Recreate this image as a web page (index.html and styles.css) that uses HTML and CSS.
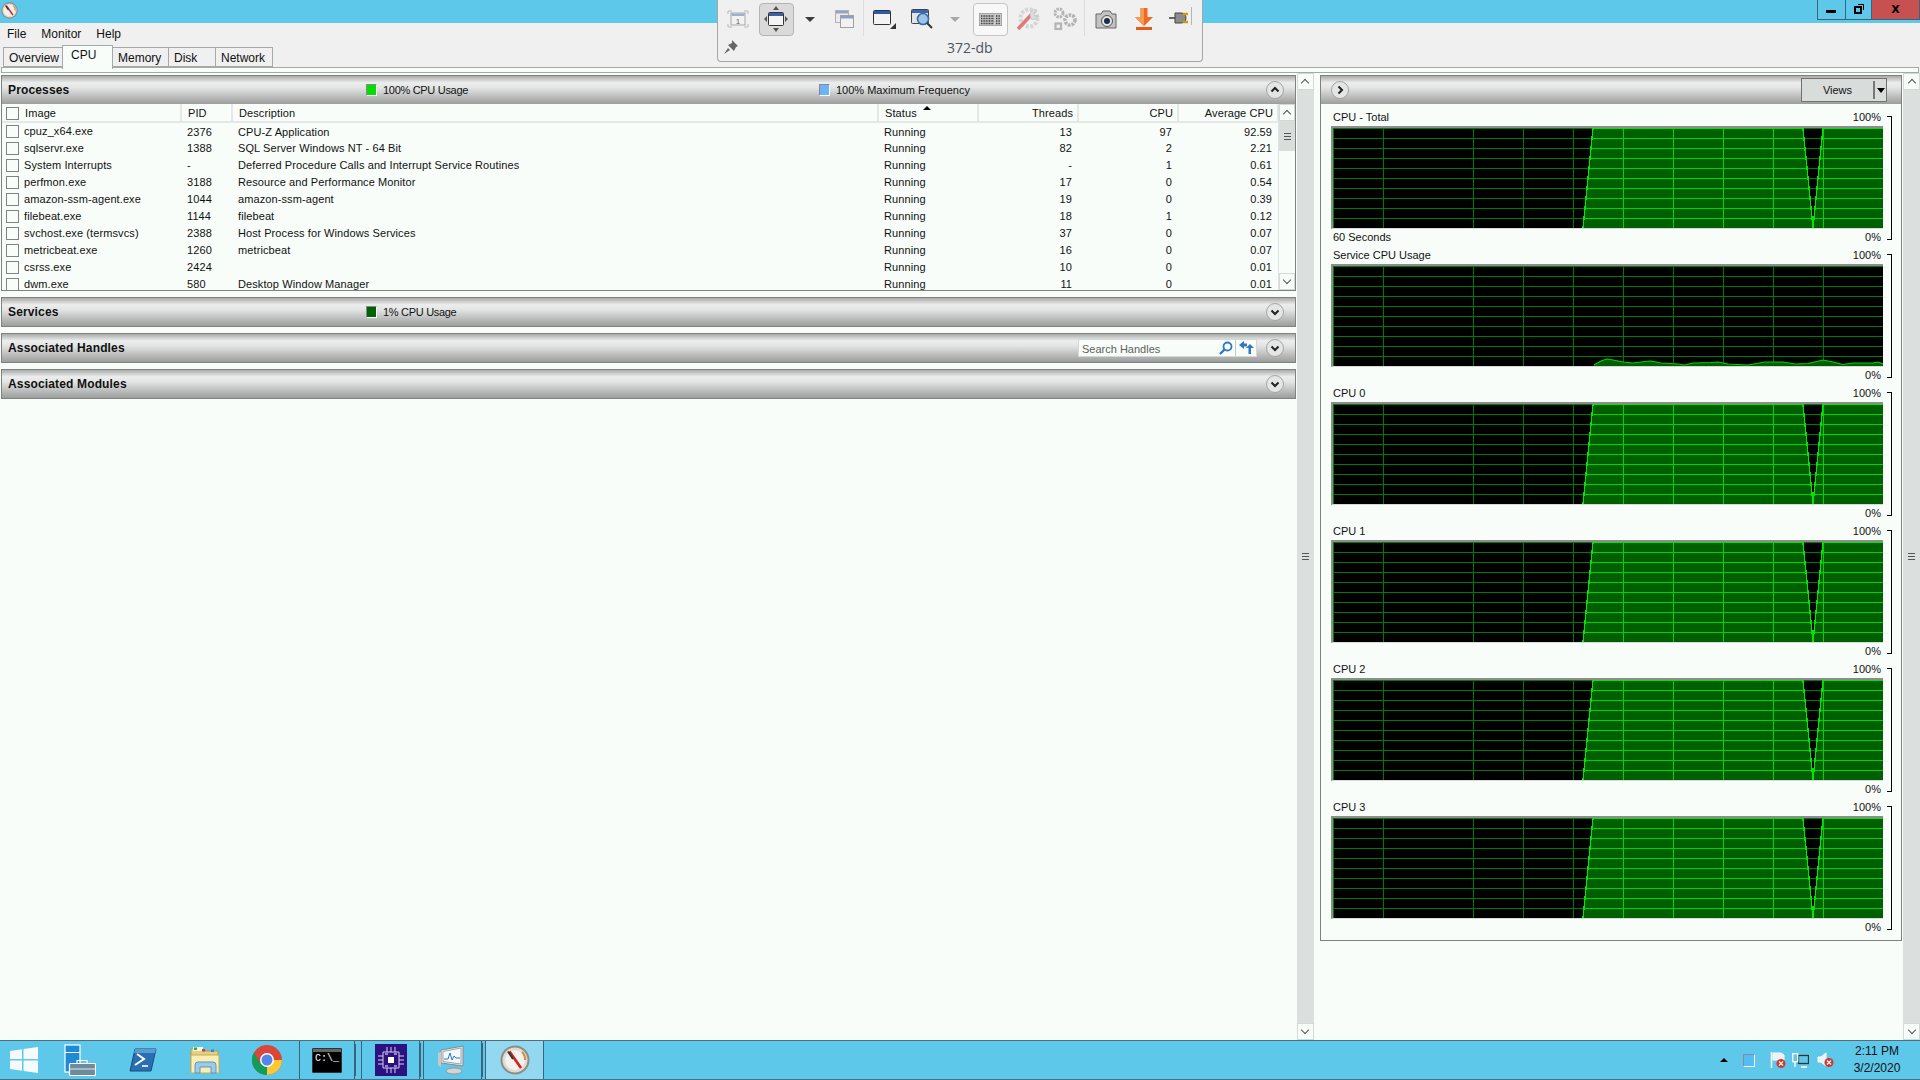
FILE: index.html
```html
<!DOCTYPE html>
<html lang="en">
<head>
    <meta charset="UTF-8">
    <title>Resource Monitor</title>
    <link rel="stylesheet" href="styles.css">
</head>
<body>
    <!-- Shared icons -->
    <svg class="sprite" aria-hidden="true">
        <defs>
            <symbol id="chev" viewBox="0 0 18 18">
                <circle cx="9" cy="9" r="8.5" fill="#e4e6e5" stroke="#a2a5a4"/>
                <path d="M5.5 7.5 9 11l3.5-3.5" fill="none" stroke="#222" stroke-width="2"/>
            </symbol>
            <symbol id="compass" viewBox="0 0 30 30">
                <circle cx="15" cy="15" r="14.5" fill="#8d8d88"/>
                <circle cx="15" cy="15" r="12.5" fill="#dedbd2"/>
                <circle cx="15" cy="15" r="10" fill="#f4f2ec"/>
                <path d="M22 7a10 10 0 0 1 3 8" fill="none" stroke="#d98a3a" stroke-width="2"/>
                <path d="M9.5 6.5 21 23" stroke="#d02020" stroke-width="2.6"/>
                <path d="M8 6.5 13 14" stroke="#333" stroke-width="2"/>
            </symbol>
            <path id="grid-lines" d="M.5 0v100M50.5 0v100M140.5 0v100M190.5 0v100M240.5 0v100M290.5 0v100M340.5 0v100M390.5 0v100M440.5 0v100M490.5 0v100M0 .5h550M0 10.5h550M0 20.5h550M0 30.5h550M0 40.5h550M0 50.5h550M0 60.5h550M0 70.5h550M0 80.5h550M0 90.5h550" fill="none"/>
            <clipPath id="load-clip"><path d="M250 100 260 0H470L480 100 490 0H550V100Z"/></clipPath>
            <symbol id="chart-load" viewBox="0 0 550 100">
                <rect width="550" height="100" fill="#000"/>
                <use href="#grid-lines" stroke="#007a00"/>
                <path d="M250 100 260 0H470L480 100 490 0H550V100Z" fill="#005f00"/>
                <g clip-path="url(#load-clip)"><use href="#grid-lines" stroke="#00d400"/></g>
                <path d="M250 100 260 .5H470L480 100 490 .5H550" fill="none" stroke="#00e600" stroke-width="1.4" shape-rendering="crispEdges"/>
            </symbol>
            <symbol id="chart-svc" viewBox="0 0 550 100">
                <rect width="550" height="100" fill="#000"/>
                <use href="#grid-lines" stroke="#007a00"/>
                <path d="M261 100V99L268 95 274 93 280 94 290 96 300 97 312 95.5 318 95 328 97 345 98 352 99 360 97 378 96.5 385 96 395 98 415 99 432 96 450 96 462 98 475 97.5 490 94 500 96 510 98.5 520 97 540 97 545 96 550 98V100Z" fill="#005f00"/>
                <path d="M261 99 268 95 274 93 280 94 290 96 300 97 312 95.5 318 95 328 97 345 98 352 99 360 97 378 96.5 385 96 395 98 415 99 432 96 450 96 462 98 475 97.5 490 94 500 96 510 98.5 520 97 540 97 545 96 550 98" fill="none" stroke="#00d400" stroke-width="1.2"/>
            </symbol>
        </defs>
    </svg>

    <div class="titlebar">
        <svg class="app-icon"><use href="#compass"/></svg>
        <div class="win-buttons">
            <div class="win-btn win-min"><span class="min-glyph"></span></div>
            <div class="win-btn win-restore"><span class="restore-glyph"></span></div>
            <div class="win-btn win-close">X</div>
        </div>
    </div>

    <!-- Remote desktop connection bar, floats over the window -->
    <div class="conn-bar">
        <div class="conn-icons">
            <div class="conn-slot">
                <svg width="22" height="18" viewBox="0 0 22 18"><path d="M1 4V1h4M17 1h4v3M1 14v3h4M17 17h4v-3" fill="none" stroke="#b9b9b9"/><rect x="4" y="3" width="14" height="12" fill="#f2f2f2" stroke="#a8a8a8"/><rect x="4.5" y="3.5" width="13" height="2.5" fill="#9fb0cc"/><text x="11" y="13.500" class="tiny-num">1</text></svg>
            </div>
            <div class="conn-slot">
                <div class="conn-toggle on">
                    <svg width="24" height="26" viewBox="0 0 24 26"><path d="M12 0l3 4H9zM12 26l-3-4h6zM0 13l3-3v6zM24 13l-3 3v-6z" fill="#555"/><rect x="4.500" y="6.500" width="15" height="13" rx="1" fill="#f4f4f4" stroke="#333"/><rect x="5" y="7" width="14" height="3" fill="#3b5ea8"/></svg>
                </div>
            </div>
            <div class="conn-slot"><span class="caret"></span></div>
            <div class="conn-slot">
                <svg width="19" height="19" viewBox="0 0 19 19"><rect x=".5" y=".5" width="13" height="12" fill="#ececec" stroke="#b0b0b0"/><rect x="1" y="1" width="12" height="2.500" fill="#93a6c6"/><rect x="5.500" y="5.500" width="13" height="12" fill="#f2f2f2" stroke="#a0a0a0"/><rect x="6" y="6" width="12" height="2.500" fill="#8ba0c4"/></svg>
            </div>
            <div class="conn-sep"></div>
            <div class="conn-slot">
                <svg width="23" height="19" viewBox="0 0 23 19"><rect x=".5" y=".5" width="17" height="14" rx="1" fill="#f3f3f3" stroke="#333"/><rect x="1" y="1" width="16" height="3" fill="#2f5aa6"/><path d="M23 19h-6l6-6z" fill="#333"/></svg>
            </div>
            <div class="conn-slot">
                <svg width="22" height="20" viewBox="0 0 22 20"><rect x=".5" y=".5" width="17" height="14" rx="1" fill="#e4e4e4" stroke="#444"/><rect x="1" y="1" width="16" height="3" fill="#3d66ae"/><circle cx="12" cy="10" r="5.500" fill="#9cc4ea" stroke="#3a6ea5" stroke-width="1.600"/><path d="M16 14l5 5" stroke="#333" stroke-width="2"/></svg>
            </div>
            <div class="conn-slot"><span class="caret faded"></span></div>
            <div class="conn-slot">
                <div class="conn-toggle key">
                    <svg width="23" height="13" viewBox="0 0 23 13"><rect width="23" height="13" fill="#c8c8c8" stroke="#888"/><path d="M2 3h13M2 5.500h13M2 8h13M2 10.500h13M17 3h4M17 5.500h4M17 8h4M17 10.500h4" stroke="#3c3c3c" stroke-width="1.500" stroke-dasharray="1 .6"/></svg>
                </div>
            </div>
            <div class="conn-slot">
                <svg width="24" height="24" viewBox="0 0 24 24"><circle cx="13" cy="11" r="8.500" fill="none" stroke="#d6d6d6" stroke-width="4" stroke-dasharray="3 1.500"/><path d="M2 22 15 8" stroke="#e07a78" stroke-width="3.500"/><path d="M14 8a5 5 0 0 1 7-5l-3 3 1 3 3 0a5 5 0 0 1-7 3z" fill="#dcdcdc" stroke="#bbb" stroke-width=".6"/></svg>
            </div>
            <div class="conn-slot">
                <svg width="26" height="24" viewBox="0 0 26 24" fill="none" stroke="#b4b4b4"><circle cx="7" cy="6" r="4" stroke-width="3" stroke-dasharray="2.200 1"/><circle cx="18" cy="13" r="5" stroke-width="3.600" stroke-dasharray="2.600 1"/><rect x="3.500" y="16.500" width="5.500" height="5.500" stroke-width="2.200"/></svg>
            </div>
            <div class="conn-sep"></div>
            <div class="conn-slot">
                <svg width="22" height="19" viewBox="0 0 22 19"><path d="M1 4h5l2-3h7l2 3h4v14H1z" fill="#c4c4c4" stroke="#666"/><circle cx="12" cy="11" r="5.500" fill="#e6e6e6" stroke="#555"/><circle cx="12" cy="11" r="3" fill="#1f2d4a"/></svg>
            </div>
            <div class="conn-slot">
                <svg width="18" height="22" viewBox="0 0 18 22"><path d="M5.500 0h7v9H18L9 18 0 9h5.500z" fill="#ee6a22"/><path d="M5.500 0H9v18L0 9h5.500z" fill="#f59a52"/><rect x="1" y="19" width="16" height="3" fill="#e85a18"/></svg>
            </div>
            <div class="conn-slot plug-slot">
                <svg width="23" height="24" viewBox="0 0 23 24"><path d="M0 11h7" stroke="#666" stroke-width="2"/><path d="M6 6h6a5 5 0 0 1 0 10H6z" fill="#8c8c8c" stroke="#444"/><path d="M14 7h5M14 15h5" stroke="#c9a400" stroke-width="2.400"/><path d="M22.500 0v18" stroke="#b5b5b5"/></svg>
            </div>
        </div>
        <div class="conn-foot">
            <svg class="pin" width="14" height="14" viewBox="0 0 14 14"><path d="M8 0l6 6-2 1-2 4-6-6 4-2zM4 8 0 14l6-4z" fill="#666"/></svg>
            <span class="conn-name">372-db</span>
        </div>
    </div>

    <div class="menubar">
        <span>File</span>
        <span>Monitor</span>
        <span>Help</span>
    </div>

    <div class="tabs">
        <div class="tab tab-overview">Overview</div>
        <div class="tab tab-active">CPU</div>
        <div class="tab tab-memory">Memory</div>
        <div class="tab tab-disk">Disk</div>
        <div class="tab tab-network">Network</div>
    </div>
    <div class="tab-pane"></div>

    <div class="main">
        <!-- Left column: sections -->
        <div class="left-col">
            <div class="panel">
                <div class="panel-head">
                    <span class="panel-title">Processes</span>
                    <span class="legend legend-cpu"><i class="swatch green"></i>100% CPU Usage</span>
                    <span class="legend legend-freq"><i class="swatch blue"></i>100% Maximum Frequency</span>
                    <svg class="chev up"><use href="#chev"/></svg>
                </div>
                <div class="table-wrap">
                    <div class="table-clip">
                        <table class="proc-table">
                            <colgroup>
                                <col class="c-image"><col class="c-pid"><col class="c-desc"><col class="c-num"><col class="c-num"><col class="c-num"><col class="c-num">
                            </colgroup>
                            <thead>
                                <tr>
                                    <th class="first"><i class="check"></i>Image</th>
                                    <th>PID</th>
                                    <th>Description</th>
                                    <th class="sorted">Status<i class="sort-arrow"></i></th>
                                    <th class="num">Threads</th>
                                    <th class="num">CPU</th>
                                    <th class="num">Average CPU</th>
                                </tr>
                            </thead>
                            <tbody>
                                <tr><td class="first"><i class="check"></i>cpuz_x64.exe</td><td>2376</td><td>CPU-Z Application</td><td>Running</td><td class="num">13</td><td class="num">97</td><td class="num">92.59</td></tr>
                                <tr><td class="first"><i class="check"></i>sqlservr.exe</td><td>1388</td><td>SQL Server Windows NT - 64 Bit</td><td>Running</td><td class="num">82</td><td class="num">2</td><td class="num">2.21</td></tr>
                                <tr><td class="first"><i class="check"></i>System Interrupts</td><td>-</td><td>Deferred Procedure Calls and Interrupt Service Routines</td><td>Running</td><td class="num">-</td><td class="num">1</td><td class="num">0.61</td></tr>
                                <tr><td class="first"><i class="check"></i>perfmon.exe</td><td>3188</td><td>Resource and Performance Monitor</td><td>Running</td><td class="num">17</td><td class="num">0</td><td class="num">0.54</td></tr>
                                <tr><td class="first"><i class="check"></i>amazon-ssm-agent.exe</td><td>1044</td><td>amazon-ssm-agent</td><td>Running</td><td class="num">19</td><td class="num">0</td><td class="num">0.39</td></tr>
                                <tr><td class="first"><i class="check"></i>filebeat.exe</td><td>1144</td><td>filebeat</td><td>Running</td><td class="num">18</td><td class="num">1</td><td class="num">0.12</td></tr>
                                <tr><td class="first"><i class="check"></i>svchost.exe (termsvcs)</td><td>2388</td><td>Host Process for Windows Services</td><td>Running</td><td class="num">37</td><td class="num">0</td><td class="num">0.07</td></tr>
                                <tr><td class="first"><i class="check"></i>metricbeat.exe</td><td>1260</td><td>metricbeat</td><td>Running</td><td class="num">16</td><td class="num">0</td><td class="num">0.07</td></tr>
                                <tr><td class="first"><i class="check"></i>csrss.exe</td><td>2424</td><td></td><td>Running</td><td class="num">10</td><td class="num">0</td><td class="num">0.01</td></tr>
                                <tr><td class="first"><i class="check"></i>dwm.exe</td><td>580</td><td>Desktop Window Manager</td><td>Running</td><td class="num">11</td><td class="num">0</td><td class="num">0.01</td></tr>
                            </tbody>
                        </table>
                    </div>
                    <div class="mini-scroll">
                        <div class="sb-btn"><i class="sb-up"></i></div>
                        <div class="sb-thumb"><i class="grip"></i></div>
                        <div class="sb-track"></div>
                        <div class="sb-btn sb-btn-down"><i class="sb-down"></i></div>
                    </div>
                </div>
            </div>

            <div class="panel">
                <div class="panel-head">
                    <span class="panel-title">Services</span>
                    <span class="legend legend-cpu"><i class="swatch dark"></i>1% CPU Usage</span>
                    <svg class="chev"><use href="#chev"/></svg>
                </div>
            </div>

            <div class="panel">
                <div class="panel-head">
                    <span class="panel-title">Associated Handles</span>
                    <div class="search-box">
                        <span class="search-text">Search Handles</span>
                        <svg class="search-icon" width="14" height="14" viewBox="0 0 14 14"><circle cx="8.500" cy="5.500" r="4" fill="none" stroke="#2f78c4" stroke-width="1.800"/><path d="M5.500 8.500 1 13" stroke="#2f78c4" stroke-width="2.400"/></svg>
                        <span class="search-sep"></span>
                        <svg class="search-refresh" width="15" height="14" viewBox="0 0 15 14"><path d="M0 4l5-4v2.500h3V5.500H5V8zM15 7l-4-4-4 4h2.500v6H12V7z" fill="#2f78c4"/></svg>
                    </div>
                    <svg class="chev search-chev"><use href="#chev"/></svg>
                </div>
            </div>

            <div class="panel">
                <div class="panel-head">
                    <span class="panel-title">Associated Modules</span>
                    <svg class="chev"><use href="#chev"/></svg>
                </div>
            </div>
        </div>

        <div class="outer-scroll">
            <div class="sb-btn"><i class="sb-up"></i></div>
            <div class="outer-thumb"><i class="grip"></i></div>
            <div class="sb-btn"><i class="sb-down"></i></div>
        </div>

        <!-- Right column: graphs -->
        <div class="right-col">
            <div class="graph-panel">
                <div class="panel-head">
                    <svg class="chev right"><use href="#chev"/></svg>
                    <div class="views-btn"><span class="views-label">Views</span><span class="views-split"></span><i class="views-caret"></i></div>
                </div>
                <div class="graph-list">
                    <div class="graph-block">
                        <div class="graph-col">
                            <div class="graph-row"><span>CPU - Total</span><span class="pct">100%</span></div>
                            <div class="graph"><svg><use href="#chart-load"/></svg></div>
                            <div class="graph-row foot"><span>60 Seconds</span><span class="pct">0%</span></div>
                        </div>
                        <div class="bracket"></div>
                    </div>
                    <div class="graph-block">
                        <div class="graph-col">
                            <div class="graph-row"><span>Service CPU Usage</span><span class="pct">100%</span></div>
                            <div class="graph"><svg><use href="#chart-svc"/></svg></div>
                            <div class="graph-row foot"><span></span><span class="pct">0%</span></div>
                        </div>
                        <div class="bracket"></div>
                    </div>
                    <div class="graph-block">
                        <div class="graph-col">
                            <div class="graph-row"><span>CPU 0</span><span class="pct">100%</span></div>
                            <div class="graph"><svg><use href="#chart-load"/></svg></div>
                            <div class="graph-row foot"><span></span><span class="pct">0%</span></div>
                        </div>
                        <div class="bracket"></div>
                    </div>
                    <div class="graph-block">
                        <div class="graph-col">
                            <div class="graph-row"><span>CPU 1</span><span class="pct">100%</span></div>
                            <div class="graph"><svg><use href="#chart-load"/></svg></div>
                            <div class="graph-row foot"><span></span><span class="pct">0%</span></div>
                        </div>
                        <div class="bracket"></div>
                    </div>
                    <div class="graph-block">
                        <div class="graph-col">
                            <div class="graph-row"><span>CPU 2</span><span class="pct">100%</span></div>
                            <div class="graph"><svg><use href="#chart-load"/></svg></div>
                            <div class="graph-row foot"><span></span><span class="pct">0%</span></div>
                        </div>
                        <div class="bracket"></div>
                    </div>
                    <div class="graph-block">
                        <div class="graph-col">
                            <div class="graph-row"><span>CPU 3</span><span class="pct">100%</span></div>
                            <div class="graph"><svg><use href="#chart-load"/></svg></div>
                            <div class="graph-row foot"><span></span><span class="pct">0%</span></div>
                        </div>
                        <div class="bracket"></div>
                    </div>
                </div>
            </div>
        </div>

        <div class="outer-scroll outer-scroll-right">
            <div class="sb-btn"><i class="sb-up"></i></div>
            <div class="outer-thumb"><i class="grip"></i></div>
            <div class="sb-btn"><i class="sb-down"></i></div>
        </div>
    </div>

    <div class="taskbar">
        <div class="pinned">
            <div class="task-slot slot-start">
                <svg width="28" height="26" viewBox="0 0 28 26"><path d="M0 4 12 2.200V12H0zM13.500 2 28 0V12H13.500zM0 13.500H12V23.800L0 22zM13.500 13.500H28V26L13.500 24z" fill="#f4fbfa"/></svg>
            </div>
            <div class="task-slot slot-server">
                <svg width="32" height="32" viewBox="0 0 32 32"><rect x="1" y="1" width="15" height="27" fill="#1e8bd8" stroke="#fff" stroke-width="1.200"/><path d="M1 8.500h15" stroke="#fff"/><rect x="5.500" y="19.500" width="26" height="12" rx="1" fill="#6e8b9d" stroke="#fff" stroke-width="1.200"/><path d="M13 19v-2.500h10V19" fill="none" stroke="#fff" stroke-width="1.200"/><path d="M6 25h25" stroke="#fff" stroke-width=".8"/></svg>
            </div>
            <div class="task-slot slot-ps">
                <svg width="28" height="24" viewBox="0 0 28 24"><path d="M6 1h21l-5 22H1z" fill="#2a6fb2" stroke="#1a4a80"/><path d="M6 1h21l-1 4H5z" fill="#5a9bd0"/><path d="M8 6l7 5-9 6" fill="none" stroke="#fff" stroke-width="2"/><path d="M13 18h6" stroke="#fff" stroke-width="1.600"/></svg>
            </div>
            <div class="task-slot slot-explorer">
                <svg width="30" height="28" viewBox="0 0 30 28"><path d="M1 3h10l2 2h15v21H1z" fill="#e8cf7e" stroke="#b79a4a"/><rect x="3" y="1" width="10" height="4" fill="#f6f6f0"/><rect x="4" y="1.500" width="3" height="2.500" fill="#2ab12a"/><rect x="12" y="3" width="3" height="2.500" fill="#d63a2a"/><rect x="21" y="3.500" width="3" height="2.500" fill="#2e86d6"/><path d="M1 9h28v18H1z" fill="#fbeeb4" stroke="#c4a95a"/><path d="M5 27V19q0-3 3-3h15q3 0 3 3v8h-5v-6h-11v6z" fill="#9ccbe8" stroke="#5d95c0"/></svg>
            </div>
            <div class="task-slot slot-chrome">
                <svg width="30" height="30" viewBox="0 0 30 30"><circle cx="15" cy="15" r="15" fill="#d9473a"/><path d="M15 15 2 7.500A15 15 0 0 0 15 30L22 16z" fill="#109d58"/><path d="M15 15H30A15 15 0 0 1 15 30z" fill="#fcc934"/><path d="M15 15 8 3 2 7.500 8.500 19z" fill="#d9473a"/><circle cx="15" cy="15" r="7" fill="#fff"/><circle cx="15" cy="15" r="5.500" fill="#4e86ec"/></svg>
            </div>
        </div>
        <div class="task-btn task-cmd">
            <div class="cmd-icon"><span class="cmd-title"></span><span class="cmd-text">C:\_</span></div>
        </div>
        <div class="task-btn">
            <svg width="32" height="32" viewBox="0 0 32 32"><rect width="32" height="32" fill="#2c1280"/><path d="M8 8h16v16H8zM12 3v5M16 3v5M20 3v5M12 24v5M16 24v5M20 24v5M3 12h5M3 16h5M3 20h5M24 12h5M24 16h5M24 20h5" fill="none" stroke="#d8d0f0"/><rect x="13" y="13" width="6" height="6" fill="#fff"/><path d="M10 10h3M19 10h3M10 22h3M19 22h3" stroke="#fff"/></svg>
        </div>
        <div class="task-btn">
            <svg width="32" height="30" viewBox="0 0 32 30"><path d="M4 5 26 1v20L4 18z" fill="#e6e6e6" stroke="#8a8a8a"/><path d="M6 6.500 24 3v16L6 16.500z" fill="#f4f8fb" stroke="#9aa"/><path d="M7 14h4l2-6 2 7 2-4 2 2h4" fill="none" stroke="#2f78c4"/><path d="M1 8v12l3 2V7z" fill="#c9c9c9"/><ellipse cx="17" cy="26" rx="8" ry="3" fill="#d4d4d4" stroke="#9a9a9a"/></svg>
        </div>
        <div class="task-btn task-active">
            <svg width="30" height="30"><use href="#compass"/></svg>
        </div>
        <div class="tray">
            <i class="tray-arrow"></i>
            <i class="tray-box"></i>
            <svg class="tray-flag" width="16" height="16" viewBox="0 0 16 16"><path d="M1.500 0v16" stroke="#fff" stroke-width="1.500"/><path d="M3 1h8l3 2v5H3z" fill="#e8f4f8" stroke="#fff"/><circle cx="11" cy="11.500" r="4.500" fill="#d8352a"/><path d="M9 9.500l4 4M13 9.500l-4 4" stroke="#fff" stroke-width="1.200"/></svg>
            <svg class="tray-net" width="17" height="15" viewBox="0 0 17 15" fill="none" stroke="#fff" stroke-width="1.300"><rect x="6.500" y="2.500" width="10" height="8" stroke="#333"/><rect x=".7" y=".7" width="5" height="8"/><path d="M3 9v5M9 14h6"/></svg>
            <svg class="tray-sound" width="17" height="16" viewBox="0 0 17 16"><path d="M1 5h3l5-4v13L4 10H1z" fill="#e8f4f8" stroke="#fff"/><circle cx="12" cy="10.500" r="4.500" fill="#d8352a"/><path d="M10 8.500l4 4M14 8.500l-4 4" stroke="#fff" stroke-width="1.200"/></svg>
            <div class="clock"><span>2:11 PM</span><span>3/2/2020</span></div>
        </div>
    </div>
</body>
</html>
```

FILE: styles.css
```css
* {
    box-sizing: border-box;
}
body {
    font-family: "Liberation Sans", Arial, sans-serif;
    font-size: 11px;
    color: #111;
    margin: 0;
    padding: 0;
    width: 1920px;
    height: 1080px;
    overflow: hidden;
    display: flex;
    flex-direction: column;
    background-color: #f0f0f0;
}
.sprite {
    position: absolute;
    width: 0;
    height: 0;
}

/* Title bar */
.titlebar {
    height: 23px;
    background-color: #5ec8eb;
    display: flex;
    justify-content: space-between;
}
.app-icon {
    width: 17px;
    height: 17px;
    margin: 2px 0 0 1px;
}
.win-buttons {
    display: flex;
    height: 20px;
}
.win-btn {
    display: flex;
    align-items: center;
    justify-content: center;
    border: 1px solid #3c6478;
    border-top: none;
    margin-left: -1px;
}
.win-min {
    width: 29px;
}
.win-restore {
    width: 27px;
}
.win-close {
    width: 49px;
    background-color: #c75050;
    font-family: "DejaVu Sans", sans-serif;
    font-weight: bold;
    font-size: 11px;
    color: #000;
}
.min-glyph {
    width: 10px;
    height: 3px;
    margin: 4px 1px 0 0;
    background-color: #000;
}
.restore-glyph {
    width: 8px;
    height: 8px;
    margin-right: 2px;
    border: 2px solid #000;
    box-shadow: 2px -2px 0 -1px #5ec8eb, 3px -3px 0 -1px #000;
}

/* Connection bar */
.conn-bar {
    position: absolute;
    left: 717px;
    top: 0;
    width: 486px;
    height: 62px;
    background-color: #f0f0f0;
    border: 1px solid #a6a6a6;
    border-top: none;
    border-radius: 0 0 4px 4px;
}
.conn-icons {
    display: grid;
    grid-template-columns: 38px 38px 30px 38px 2px 38px 38px 28px 42px 34px 39px 2px 40px 36px 36px;
    height: 37px;
    padding-left: 1px;
}
.conn-slot {
    display: flex;
    align-items: center;
    justify-content: center;
    padding-top: 1px;
}
.conn-sep {
    width: 1px;
    height: 36px;
    background-color: #dcdcdc;
}
.conn-toggle {
    width: 35px;
    height: 33px;
    border-radius: 4px;
    display: flex;
    align-items: center;
    justify-content: center;
}
.conn-toggle.on {
    background-color: #dadada;
    border: 1px solid #b4b4b4;
}
.conn-toggle.key {
    background-color: #f8f8f8;
    border: 1px solid #c4c4c4;
}
.caret {
    width: 0;
    height: 0;
    border-left: 5px solid transparent;
    border-right: 5px solid transparent;
    border-top: 5px solid #3c3c3c;
}
.caret.faded {
    border-top-color: #a8a8a8;
}
.tiny-num {
    font-family: "Liberation Sans", sans-serif;
    font-size: 8px;
    fill: #666;
    text-anchor: middle;
}
.conn-foot {
    display: flex;
    align-items: center;
    height: 20px;
}
.pin {
    margin-left: 6px;
}
.conn-name {
    margin-left: 209px;
    font-family: "Open Sans", sans-serif;
    font-size: 14px;
    color: #4a5560;
}

/* Menu and tabs */
.menubar {
    height: 24px;
    display: flex;
    align-items: center;
    padding: 0 0 2px 7px;
    gap: 15px;
    font-size: 12px;
}
.tabs {
    height: 20px;
    display: flex;
    padding-left: 3px;
    font-size: 12px;
}
.tab {
    height: 20px;
    padding: 3px 0 0 5px;
    border: 1px solid #a4aaa8;
    margin-right: -1px;
    background-color: #f0f0f0;
}
.tab-overview {
    width: 60px;
}
.tab-memory {
    width: 57px;
}
.tab-disk {
    width: 48px;
}
.tab-network {
    width: 58px;
}
.tab-active {
    width: 51px;
    height: 24px;
    margin-top: -2px;
    padding-top: 2px;
    padding-left: 8px;
    background-color: #f8fdfa;
    border-bottom: none;
    position: relative;
    z-index: 1;
}
.tab-pane {
    height: 6px;
    margin: 0 1px;
    background-color: #f8fdfa;
    border: 1px solid #a4aaa8;
}

/* Main area */
.main {
    flex: 1;
    min-height: 0;
    display: flex;
    background-color: #f8fdfa;
}
.left-col {
    width: 1296px;
    padding: 2px 0 0 1px;
    display: flex;
    flex-direction: column;
    gap: 6px;
}
.panel {
    border: 1px solid #7f8281;
}
.panel-head {
    height: 28px;
    display: flex;
    align-items: center;
    position: relative;
    background: linear-gradient(#a9abaa 0, #eceeed 24%, #e3e5e4 42%, #9c9e9d 100%);
}
.panel-title {
    margin-left: 6px;
    font-size: 12px;
    font-weight: bold;
    letter-spacing: .15px;
}
.legend {
    position: absolute;
    display: flex;
    align-items: center;
    top: 8px;
}
.legend-cpu {
    left: 364px;
    letter-spacing: -.3px;
}
.legend-freq {
    left: 817px;
}
.swatch {
    width: 11px;
    height: 12px;
    margin-right: 6px;
    border: 1px solid #888;
    border-bottom-color: #fff;
    border-right-color: #fff;
}
.swatch.green {
    background-color: #00e000;
}
.swatch.blue {
    background-color: #6cb4f8;
}
.swatch.dark {
    background-color: #006400;
}
.chev {
    width: 18px;
    height: 18px;
    margin-left: auto;
    margin-right: 11px;
}
.chev.up {
    transform: rotate(180deg);
}
.chev.right {
    transform: rotate(-90deg);
    margin: 0 0 0 10px;
}
.search-chev {
    margin-left: 9px;
}

/* Processes table */
.table-wrap {
    display: flex;
    height: 186px;
}
.table-clip {
    width: 1276px;
    overflow: hidden;
}
.proc-table {
    width: 1276px;
    table-layout: fixed;
    border-collapse: collapse;
    letter-spacing: .1px;
}
.c-image {
    width: 179px;
}
.c-pid {
    width: 51px;
}
.c-desc {
    width: 646px;
}
.c-num {
    width: 100px;
}
.proc-table th {
    height: 18px;
    padding: 1px 6px 0;
    text-align: left;
    font-weight: normal;
    border-right: 2px solid #e4e8e6;
    border-bottom: 2px solid #e4e8e6;
    white-space: nowrap;
}
.proc-table td {
    height: 17px;
    padding: 1px 6px 0;
    white-space: nowrap;
}
.proc-table .first {
    padding-left: 4px;
}
.proc-table th.first .check {
    margin-right: 6px;
}
.proc-table .num {
    text-align: right;
}
.proc-table th.num {
    padding-right: 4px;
}
.proc-table .sorted {
    position: relative;
}
.sort-arrow {
    position: absolute;
    left: 44px;
    top: 2px;
    width: 0;
    height: 0;
    border-left: 4px solid transparent;
    border-right: 4px solid transparent;
    border-bottom: 4px solid #000;
}
.check {
    display: inline-block;
    width: 13px;
    height: 13px;
    margin-right: 5px;
    vertical-align: -3px;
    border: 1px solid #7e8482;
}
.mini-scroll {
    width: 17px;
    display: flex;
    flex-direction: column;
    border-left: 1px solid #dfe3e1;
}
.sb-btn {
    height: 17px;
    flex: none;
    display: flex;
    align-items: center;
    justify-content: center;
    background-color: #f8fdfa;
    border: 1px solid #d4d8d6;
}
.sb-up,
.sb-down {
    width: 6px;
    height: 6px;
    border-left: 1px solid #555;
    border-top: 1px solid #555;
    transform: rotate(45deg);
    margin-top: 3px;
}
.sb-down {
    transform: rotate(225deg);
    margin-top: -3px;
}
.sb-thumb {
    height: 30px;
    display: flex;
    align-items: center;
    justify-content: center;
    background-color: #d9dedc;
}
.sb-track {
    flex: 1;
}
.grip {
    width: 7px;
    height: 7px;
    border-top: 1px solid #555;
    border-bottom: 1px solid #555;
    background: linear-gradient(#555, #555) center / 100% 1px no-repeat;
}
.outer-scroll {
    width: 17px;
    margin-left: 1px;
    display: flex;
    flex-direction: column;
}
.outer-thumb {
    flex: 1;
    display: flex;
    align-items: center;
    justify-content: center;
    background-color: #dbe0de;
}

/* Search box */
.search-box {
    margin-left: auto;
    width: 179px;
    height: 18px;
    display: flex;
    align-items: center;
    background-color: #f8fdfa;
    border: 1px solid #d6d8d7;
}
.search-text {
    flex: 1;
    padding: 1px 0 0 3px;
    color: #5c6260;
}
.search-icon {
    margin-right: 2px;
}
.search-sep {
    width: 1px;
    height: 16px;
    background-color: #c4c8c6;
}
.search-refresh {
    margin: 0 2px 0 3px;
}
.panel-head .search-box + .chev {
    margin-left: 9px;
}

/* Graph column */
.right-col {
    width: 589px;
    padding: 2px 0 0 6px;
}
.graph-panel {
    width: 582px;
    height: 866px;
    border: 1px solid #7f8281;
}
.views-btn {
    margin-left: auto;
    margin-right: 14px;
    width: 86px;
    height: 24px;
    display: flex;
    align-items: center;
    background-color: #d8dcda;
    border: 1px solid #6f7270;
    font-size: 11px;
}
.views-label {
    width: 71px;
    text-align: center;
}
.views-split {
    width: 2px;
    height: 18px;
    background-color: #777;
}
.views-caret {
    margin-left: 2px;
    width: 0;
    height: 0;
    border-left: 4px solid transparent;
    border-right: 4px solid transparent;
    border-top: 5px solid #000;
}
.graph-list {
    padding: 5px 0 0 10px;
}
.graph-block {
    display: flex;
    height: 138px;
}
.graph-col {
    width: 552px;
}
.graph-row {
    height: 17px;
    display: flex;
    justify-content: space-between;
    align-items: center;
    padding: 0 2px 2px 2px;
}
.graph-row.foot {
    height: 18px;
}
.graph {
    height: 103px;
    border-top: 2px solid #8c8e8d;
    border-left: 2px solid #8c8e8d;
    border-bottom: 1px solid #d8dad9;
}
.graph svg {
    display: block;
    width: 550px;
    height: 100px;
}
.bracket {
    width: 5px;
    height: 124px;
    margin: 7px 0 0 4px;
    border: 1px solid #000;
    border-left: none;
}

/* Taskbar */
.taskbar {
    height: 40px;
    display: flex;
    align-items: center;
    background-color: #5ec8eb;
    border-top: 1px solid #4e6f7e;
    border-bottom: 1px solid #4e6f7e;
}
.pinned {
    display: grid;
    grid-template-columns: 48px 64px 62px 62px 62px;
    width: 299px;
}
.task-slot {
    display: flex;
    align-items: center;
    justify-content: center;
}
.task-btn {
    height: 38px;
    width: 59px;
    margin-right: 3px;
    display: flex;
    align-items: center;
    justify-content: center;
    border-left: 1px solid #3c6478;
    border-right: 1px solid #3c6478;
    box-shadow: 3px 0 0 -2px #3c6478;
}
.task-cmd {
    width: 56px;
    margin-right: 6px;
    box-shadow: 4px 0 0 -3px #3c6478;
}
.task-active {
    background-color: #92d8f0;
    box-shadow: none;
}
.cmd-icon {
    width: 30px;
    height: 25px;
    background-color: #000;
    border-radius: 1px;
    border: 1px solid #333;
    color: #fff;
    font-family: "Liberation Mono", monospace;
    font-size: 10px;
    line-height: 13px;
    padding-left: 2px;
}
.cmd-title {
    display: block;
    height: 3px;
    margin-left: -2px;
    background-color: #666;
}
.tray {
    margin-left: auto;
    display: flex;
    align-items: center;
}
.tray-flag {
    margin-left: 9px;
}
.tray-net {
    margin-left: 6px;
}
.tray-sound {
    margin-left: 8px;
}
.tray-arrow {
    width: 0;
    height: 0;
    border-left: 4px solid transparent;
    border-right: 4px solid transparent;
    border-bottom: 4px solid #000;
    margin-right: 15px;
}
.tray-box {
    width: 12px;
    height: 13px;
    background-color: #56bdf0;
    border: 1px solid #88a;
    border-right-color: #fff;
    border-bottom-color: #fff;
    margin-right: 6px;
}
.clock {
    width: 68px;
    margin: 0 9px 0 9px;
    display: flex;
    flex-direction: column;
    align-items: center;
    gap: 2px;
    font-size: 12px;
    line-height: 15px;
}
```
